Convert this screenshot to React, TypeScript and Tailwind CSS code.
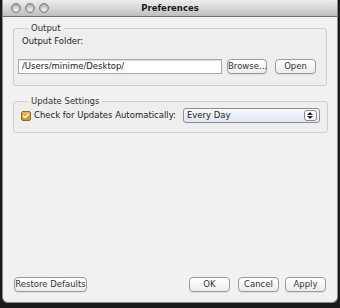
import { Check } from "lucide-react";

function Btn({ children, className = "" }: { children: React.ReactNode; className?: string }) {
  return (
    <button
      className={
        "h-[15px] whitespace-nowrap rounded-[4px] border border-[#9a9a9a] bg-gradient-to-b from-white to-[#ececec] text-[8.5px] leading-none text-[#333] shadow-[0_1px_0_rgba(0,0,0,0.08)] " +
        className
      }
    >
      {children}
    </button>
  );
}

export default function App() {
  return (
    <div
      className="w-[340px] h-[308px] bg-[#1a1a1a] overflow-hidden"
      style={{ fontFamily: '"DejaVu Sans", "Liberation Sans", sans-serif' }}
    >
      <div className="mx-[2px] h-[303px] flex flex-col bg-[#f1f1f1] rounded-b-[6px] overflow-hidden border-x border-b border-[#8a8a8a]">
        {/* title bar */}
        <div className="relative h-[17px] shrink-0 rounded-t-[5px] bg-gradient-to-b from-[#ededed] via-[#d8d8d8] to-[#bdbdbd] border-b border-[#6f6f6f] flex items-center justify-center">
          <div className="absolute left-[8px] top-[3px] flex gap-[4px]">
            {[0, 1, 2].map((i) => (
              <div
                key={i}
                className="w-[10px] h-[10px] rounded-full border border-[#7d7d7d] bg-[radial-gradient(circle_at_50%_70%,#f5f5f5,#b9b9b9_60%,#8e8e8e)]"
              />
            ))}
          </div>
          <span className="text-[8.5px] font-bold text-[#1a1a1a]">Preferences</span>
        </div>

        <div className="flex-1 flex flex-col px-[10px] pt-[6px] pb-[10px]">
          {/* Output group */}
          <fieldset className="border border-[#cfcfcf] rounded-[3px] px-[4px] pb-[11px] bg-[#eeeeee]">
            <legend className="ml-[10px] px-[3px] text-[8.5px] text-[#333] leading-[10px]">Output</legend>
            <div className="ml-[4px] text-[8.5px] text-[#222] leading-[12px] mt-[2px]">Output Folder:</div>
            <div className="flex items-center mt-[12px]">
              <div className="w-[204px] h-[15px] whitespace-nowrap bg-white border border-[#a8a8a8] shadow-[inset_0_1px_1px_rgba(0,0,0,0.15)] text-[8.5px] leading-[13px] px-[3px] text-[#222]">
                /Users/minime/Desktop/
              </div>
              <Btn className="w-[40px] ml-[5px]">Browse...</Btn>
              <Btn className="w-[41px] ml-[8px]">Open</Btn>
            </div>
          </fieldset>

          {/* Update Settings group */}
          <fieldset className="mt-[10px] border border-[#cfcfcf] rounded-[3px] px-[7px] pb-[9px] bg-[#eeeeee]">
            <legend className="ml-[7px] px-[3px] text-[8.5px] text-[#333] leading-[10px]">Update Settings</legend>
            <div className="flex items-center mt-[2px] whitespace-nowrap">
              <div className="w-[10px] h-[10px] rounded-[2px] border border-[#8a6a30] bg-gradient-to-b from-[#f3b14c] to-[#d88a22] flex items-center justify-center">
                <Check className="w-[8px] h-[8px] text-white" strokeWidth={4} />
              </div>
              <span className="ml-[3px] text-[8.5px] text-[#222]">Check for Updates Automatically:</span>
              <div className="ml-[7px] w-[137px] h-[15px] rounded-[3px] border border-[#8f8f8f] bg-gradient-to-b from-[#f6f8fc] to-[#dfe6f1] flex items-center pl-[3px] pr-[2px]">
                <span className="text-[8.5px] text-[#222] flex-1">Every Day</span>
                <div className="w-[13px] h-[11px] rounded-[3px] border border-[#8a8a8a] bg-white flex flex-col items-center justify-center gap-[1px]">
                  <div className="w-0 h-0 border-x-[3px] border-x-transparent border-b-[3px] border-b-[#222]" />
                  <div className="w-0 h-0 border-x-[3px] border-x-transparent border-t-[3px] border-t-[#222]" />
                </div>
              </div>
            </div>
          </fieldset>

          <div className="flex-1" />

          {/* bottom buttons */}
          <div className="flex items-center">
            <Btn className="w-[73px] ml-[1px]">Restore Defaults</Btn>
            <div className="flex-1" />
            <Btn className="w-[41px] border-[#6e8fb8] from-[#f4f8fd] to-[#dbe6f3]">OK</Btn>
            <Btn className="w-[41px] ml-[8px]">Cancel</Btn>
            <Btn className="w-[41px] ml-[6px] mr-[1px]">Apply</Btn>
          </div>
        </div>
      </div>
    </div>
  );
}
